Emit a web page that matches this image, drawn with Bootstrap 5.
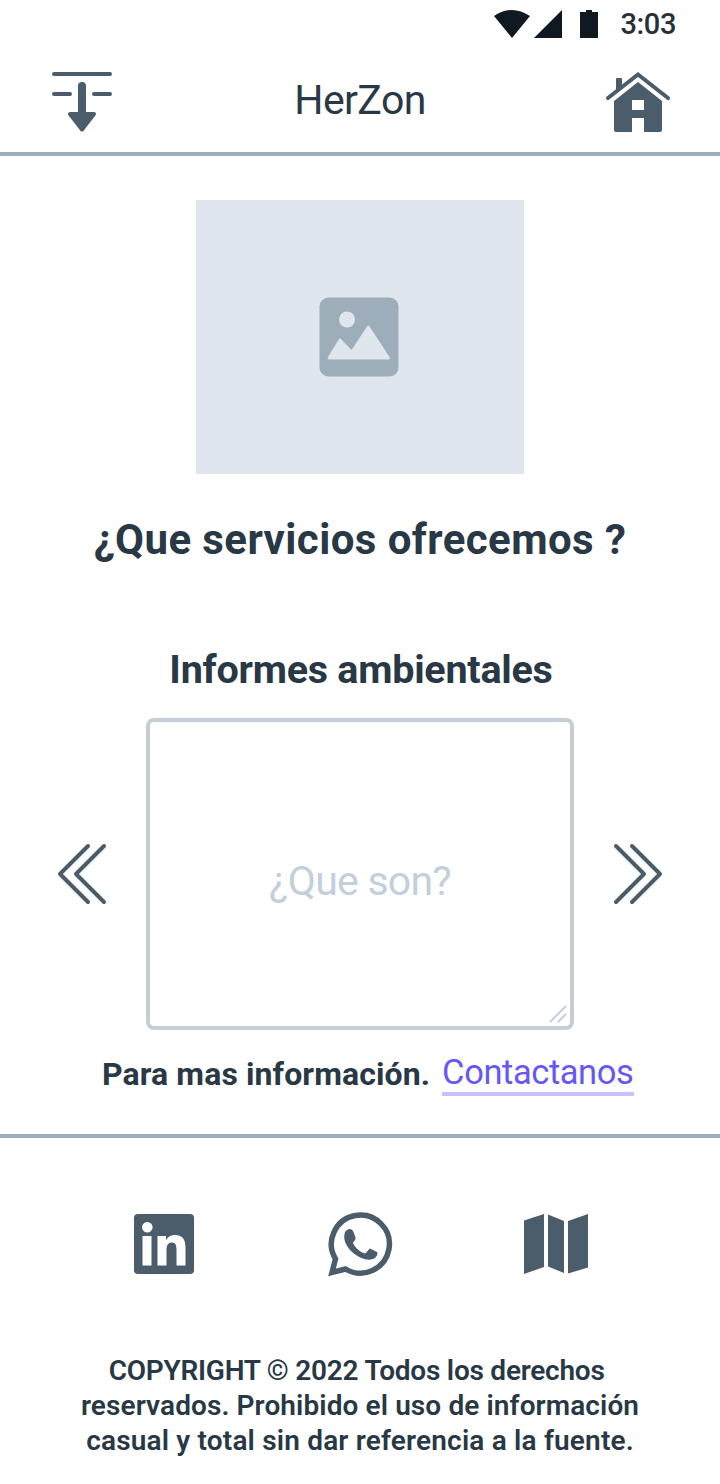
<!DOCTYPE html>
<html lang="es">
<head>
<meta charset="utf-8">
<meta name="viewport" content="width=device-width, initial-scale=1">
<title>HerZon</title>
<link href="https://cdn.jsdelivr.net/npm/bootstrap@5.3.0/dist/css/bootstrap.min.css" rel="stylesheet">
<style>
body { font-family: Roboto, "Liberation Sans", sans-serif; color: #293845; background: #fff; overflow-x: hidden; }
svg { display: block; flex: none; overflow: visible; }
.ink { color: #4b5c6a; }
.status-bar { height: 48px; padding-right: 44px; color: #101820; }
.clock { font-size: 29px; line-height: 48px; font-weight: 500; color: #2a2f38; margin-left: 22px; letter-spacing: -.4px; }
.top-bar { height: 108px; padding: 0 50px; border-bottom: 4px solid #9eadba; }
.brand { font-size: 41px; line-height: 52px; letter-spacing: -.6px; font-weight: 400; }
.photo { width: 328px; height: 274px; margin-top: 44px; padding-right: 2px; background: #dfe6ed; }
.title-main { font-size: 42px; line-height: 52px; margin-top: 40px; font-weight: 700; letter-spacing: .42px; white-space: nowrap; }
.title-sub { font-size: 39.5px; line-height: 52px; margin-top: 78px; padding-left: 2px; font-weight: 700; letter-spacing: -.25px; white-space: nowrap; }
.slide-row { margin-top: 22px; padding: 0 56px; }
.slide-box { width: 428px; height: 312px; border: 4px solid #c5ced5; border-radius: 8px; padding-top: 14px; }
.slide-text { font-size: 41px; line-height: 52px; color: #c3cfdb; letter-spacing: -.75px; }
.grip { right: 2px; bottom: 2px; }
.more-row { height: 104px; padding: 25px 0 0 102px; white-space: nowrap; }
.more-text { font-size: 32px; line-height: 38px; font-weight: 700; letter-spacing: .1px; }
.contact { margin-left: 12px; width: 192px; height: 41px; font-size: 34.5px; line-height: 34px; font-weight: 400; letter-spacing: -.42px; color: #6558f5; border-bottom: 4px solid #c8c1fb; text-decoration: none; }
.foot { border-top: 4px solid #9eadba; }
.socials { padding: 74px 130px 0 132px; }
.copy { font-size: 28px; line-height: 35px; font-weight: 600; margin-top: 77px; white-space: nowrap; }
.tight { letter-spacing: -.24px; }
.loose { letter-spacing: .1px; }
.looser { letter-spacing: .18px; }
</style>
</head>
<body>
<div class="status-bar d-flex justify-content-end">
  <svg width="105" height="48" viewBox="0 0 105 48" fill="currentColor"><path d="M0 16Q18 4 36 16L18 38ZM68 10V38H40ZM86 12h6v-2h6v2h6v26H86Z"/></svg>
  <span class="clock">3:03</span>
</div>
<header class="top-bar d-flex align-items-center justify-content-between">
  <svg class="ink" width="64" height="64" viewBox="0 0 64 64" fill="none" stroke="currentColor" stroke-width="4" stroke-linecap="round"><path d="M4 6H60M4 26H20M44 26H60"/><path d="M23 23v6M41 23v6" stroke="#fff" stroke-width="2" stroke-linecap="butt"/><path d="M32 18V46" stroke-width="8"/><path d="M20 46H44L32 61.500Z" fill="currentColor" stroke-linejoin="round"/></svg>
  <h1 class="brand mb-0">HerZon</h1>
  <svg class="ink" width="64" height="64" viewBox="0 0 64 64" fill="currentColor"><path d="M2 30 32 6.500 62 30" fill="none" stroke="currentColor" stroke-width="4" stroke-linecap="round"/><path d="M10 11q0-1 1-1h4q1 0 1 1v8l-6 5Z"/><path fill-rule="evenodd" d="M32 14 56 33V62q0 2-2 2H38V50H26V64H10q-2 0-2-2V33ZM26 32V42H38V32Z"/></svg>
</header>
<main>
  <div class="photo mx-auto d-flex align-items-center justify-content-center">
    <svg width="80" height="80" viewBox="0 0 80 80"><rect x=".5" y=".5" width="79" height="79" rx="9" fill="#9eadba"/><g fill="#dfe6ed"><circle cx="28" cy="22.500" r="8"/><path d="M9 60 20 42q1-1.400 2 0L32.500 53 48 29.500q1.300-1.800 2.600 0L70.500 60q1 2.500-1 2.500H10q-2 0-1-2.500Z"/></g></svg>
  </div>
  <h2 class="title-main text-center mb-0">¿Que servicios ofrecemos ?</h2>
  <h3 class="title-sub text-center mb-0">Informes ambientales</h3>
  <div class="slide-row d-flex align-items-center justify-content-between">
    <svg class="ink" width="52" height="64" viewBox="0 0 52 64" fill="none" stroke="currentColor" stroke-width="4" stroke-linecap="round" stroke-linejoin="round"><path d="M32 4 4 32 32 60M48 4 20 32 48 60"/></svg>
    <div class="slide-box position-relative d-flex align-items-center justify-content-center">
      <span class="slide-text">¿Que son?</span>
      <svg class="grip position-absolute" width="20" height="20" viewBox="0 0 20 20" fill="none" stroke="#c3cfdb" stroke-width="2" stroke-linecap="round"><path d="M2.500 17.500 17.500 2.500M10.500 17.500 17.500 10.500"/></svg>
    </div>
    <svg class="ink" width="52" height="64" viewBox="0 0 52 64" fill="none" stroke="currentColor" stroke-width="4" stroke-linecap="round" stroke-linejoin="round"><path d="M4 4 32 32 4 60M20 4 48 32 20 60"/></svg>
  </div>
  <div class="more-row d-flex align-items-start">
    <span class="more-text">Para mas información.</span>
    <a href="#" class="contact">Contactanos</a>
  </div>
</main>
<footer class="foot">
  <div class="socials ink d-flex justify-content-between">
    <svg width="64" height="64" viewBox="0 0 64 64" fill="currentColor"><rect x="2" y="2" width="60" height="60" rx="4"/><g fill="#fff"><circle cx="15.300" cy="15.300" r="5.300"/><path d="M10.500 24h9v29.500h-9ZM25.500 24h8.500v4c2-3.300 5-5 9-5 8 0 10.500 5 10.500 13v17.500h-9V38c0-4-.6-7.500-4.600-7.500s-5.400 3-5.400 7.500v15.500h-9Z"/></g></svg>
    <svg width="64" height="64" viewBox="0 0 64 64"><path d="M7.500 47A29 29 0 1 1 17.500 57L4 60.500Z" fill="none" stroke="currentColor" stroke-width="5.500"/><path fill="currentColor" d="M17 20c3-4 7-4 8.500 0l2 5.500c.7 2-2 4-2.500 5.500 2 5 7 9 12 10.500 2-1 3.300-4 5-5l7 3.500c1.500 2-1 6-4 7-6 2-13-1-18.500-5C20 37 14 28.500 17 20Z"/></svg>
    <svg width="66" height="64" viewBox="4 0 66 64" fill="currentColor"><path d="M4 8.500 24 2V55L4 62ZM28 2.500 44 9V61L28 54.500ZM48 9 68 2V55.500L48 61.500Z"/></svg>
  </div>
  <p class="copy text-center mb-0"><span class="tight">COPYRIGHT © 2022 Todos los derechos&nbsp;</span><br><span class="loose">reservados. Prohibido el uso de información</span><br><span class="looser">casual y total sin dar referencia a la fuente.</span></p>
</footer>
<script src="https://cdn.jsdelivr.net/npm/bootstrap@5.3.0/dist/js/bootstrap.bundle.min.js"></script>
</body>
</html>
